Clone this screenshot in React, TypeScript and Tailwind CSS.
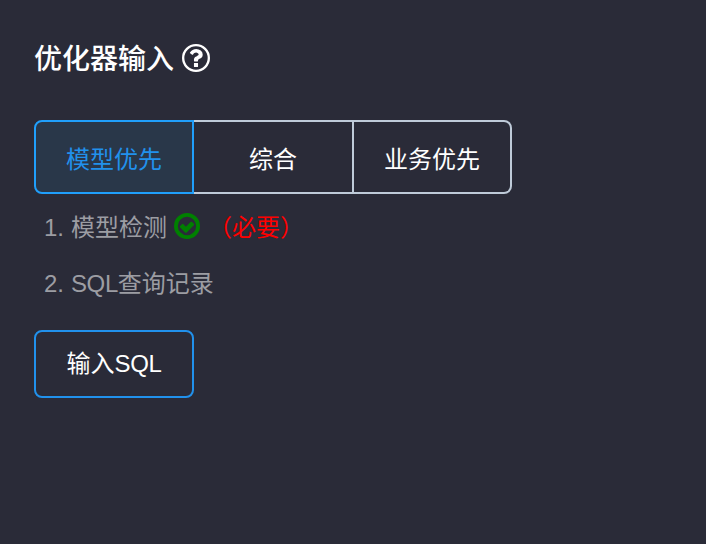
const tabs = [
  { label: "模型优先", cls: "w-40 rounded-l-lg border-[#209ffb] bg-[#293749] text-[#2191ec]" },
  { label: "综合", cls: "w-40 border-l-0 border-[#bfcbd9] text-white" },
  { label: "业务优先", cls: "w-[158px] rounded-r-lg border-l-0 border-[#bfcbd9] text-white" },
];

function QuestionIcon() {
  return (
    <svg viewBox="0 0 1536 1536" className="size-7" fill="currentColor">
      <circle cx="768" cy="768" r="704" fill="none" stroke="currentColor" strokeWidth="128" />
      <path d="M880 1072v160q0 14-9 23t-23 9h-160q-14 0-23-9t-9-23v-160q0-14 9-23t23-9h160q14 0 23 9t9 23zm256-496q0 50-15 90t-45.500 69-52 44-59.500 36q-32 18-46.500 28t-26 24-11.500 29v32q0 14-9 23t-23 9h-160q-14 0-23-9t-9-23v-68q0-35 10.500-64.500t24-47.500 39-35.500 41-25.500 44.500-21q53-25 75-43t22-49q0-42-43.500-71.500t-95.500-29.500q-56 0-95 27-29 20-80 83-9 12-25 12-11 0-19-6l-108-82q-10-7-12-20t5-23q122-192 349-192 129 0 238.500 89.500t109.500 214.500z" />
    </svg>
  );
}

function CheckIcon() {
  return (
    <svg viewBox="0 0 1536 1536" className="ml-[7px] mr-px size-[26px] -translate-y-[2px] text-[#008000]" fill="currentColor">
      <circle cx="768" cy="768" r="656" fill="none" stroke="currentColor" strokeWidth="224" />
      <path d="M1171 723l-422 422q-19 19-45 19t-45-19l-294-294q-19-19-19-45t19-45l102-102q19-19 45-19t45 19l147 147 275-275q19-19 45-19t45 19l102 102q19 19 19 45t-19 45z" />
    </svg>
  );
}

export default function App() {
  return (
    <main className="h-[544px] w-[706px] bg-[#2a2b38] pt-[38px] pl-[34px] font-['Liberation_Sans','Noto_Sans_CJK_SC',sans-serif] text-2xl text-[#9c9da3]">
      <h1 className="flex h-10 items-center gap-2 text-[28px] font-medium text-white">
        <span className="pt-[3px]">优化器输入</span>
        <QuestionIcon />
      </h1>
      <div className="mt-[42px] flex h-[74px]">
        {tabs.map((t) => (
          <button key={t.label} className={"flex items-center justify-center border-2 pt-[6px] " + t.cls}>{t.label}</button>
        ))}
      </div>
      <ol className="pl-[10px]">
        <li className="flex h-[68px] items-center">
          <span className="w-[27px]">1.</span><span>模型检测</span>
          <CheckIcon />
          <span className="ml-[7px] text-[#ff0000]">（必要）</span>
        </li>
        <li className="flex h-11 items-center"><span className="w-[27px]">2.</span><span><span className="tracking-[-0.4px]">SQL</span>查询记录</span></li>
      </ol>
      <button className="mt-6 flex h-[68px] w-40 items-center justify-center rounded-lg border-2 border-[#2191ec] text-white"><span>输入<span className="tracking-[-0.4px]">SQL</span></span></button>
    </main>
  );
}
